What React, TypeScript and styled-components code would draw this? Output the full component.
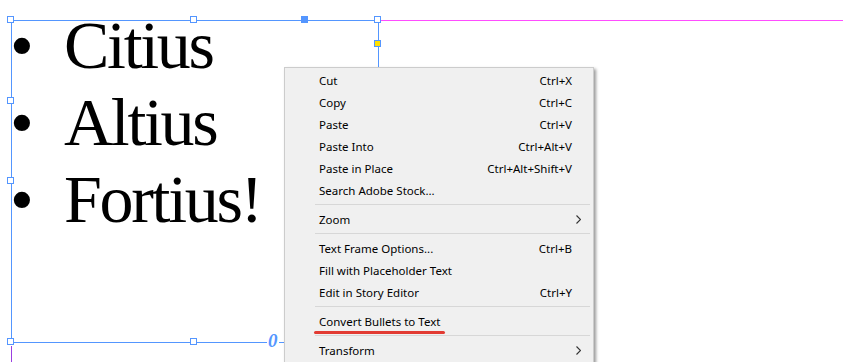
import styled, { createGlobalStyle } from 'styled-components';

const GlobalStyle = createGlobalStyle`
body {
  margin: 0;
  background: #ffffff;
  overflow: hidden;
}
`;

const Canvas = styled.div`
position: relative;
width: 843px;
height: 362px;
overflow: hidden;
background: #ffffff;
`;

const Guide = styled.div`
position: absolute;
left: 381px;
right: 0;
top: 20px;
height: 1px;
background: #ff4dff;
`;

const PurpleGuide = styled.div`
position: absolute;
left: 11px;
top: 346px;
bottom: 0;
width: 1px;
background: #9b3fe0;
`;

const TextFrame = styled.div`
position: absolute;
left: 11px;
top: 20px;
width: 368px;
height: 323px;
box-sizing: border-box;
border: 1px solid #5496ff;
`;

const BulletList = styled.ul`
list-style: none;
margin: -14px 0 0 0;
padding: 0;
font-family: 'Liberation Serif', 'Times New Roman', serif;
font-size: 68px;
line-height: 77px;
letter-spacing: -2.3px;
color: #000;
`;

const BulletRow = styled.li`
display: flex;
white-space: nowrap;
`;

const Bullet = styled.span`
width: 54px;
margin-left: -2px;
flex: none;
letter-spacing: 0;
`;

const Handle = styled.div<{ $x: number; $y: number; $fill?: string }>`
position: absolute;
left: ${p => p.$x - 4}px;
top: ${p => p.$y - 4}px;
width: 7px;
height: 7px;
box-sizing: border-box;
border: 1px solid #5496ff;
background: ${p => p.$fill || '#ffffff'};
`;

const OversetMark = styled.span`
position: absolute;
left: 267px;
top: 331px;
padding: 0 1px;
background: #ffffff;
font-family: 'Liberation Serif', serif;
font-style: italic;
font-weight: bold;
font-size: 19px;
line-height: 20px;
color: #5496ff;
`;

const Menu = styled.div`
position: absolute;
left: 284px;
top: 67px;
width: 310px;
height: 320px;
box-sizing: border-box;
padding-top: 1px;
background: #f0f0f0;
border: 1px solid #cccccc;
box-shadow: 2px 2px 3px rgba(0, 0, 0, 0.4);
font-family: 'Noto Sans', 'Open Sans', sans-serif;
font-size: 11.5px;
color: #000;
`;

const Item = styled.div`
position: relative;
display: flex;
align-items: center;
height: 22px;
padding-left: 34px;
padding-right: 21px;
`;

const Label = styled.span`
flex: 1;
`;

const Shortcut = styled.span`
text-align: right;
`;

const Arrow = styled.svg`
position: absolute;
right: 12px;
top: 7px;
`;

const Separator = styled.div`
height: 7px;
display: flex;
align-items: center;
margin-left: 30px;
margin-right: 3px;
&::after {
  content: '';
  flex: 1;
  height: 1px;
  background: #d7d7d7;
}
`;

const Underline = styled.div`
position: absolute;
left: 29px;
width: 131px;
bottom: -2px;
height: 3px;
border-radius: 2px;
background: #e23b33;
`;

type Entry =
  | { label: string; key?: string; sub?: boolean; mark?: boolean }
  | 'sep';

const entries: Entry[] = [
  { label: 'Cut', key: 'Ctrl+X' },
  { label: 'Copy', key: 'Ctrl+C' },
  { label: 'Paste', key: 'Ctrl+V' },
  { label: 'Paste Into', key: 'Ctrl+Alt+V' },
  { label: 'Paste in Place', key: 'Ctrl+Alt+Shift+V' },
  { label: 'Search Adobe Stock...' },
  'sep',
  { label: 'Zoom', sub: true },
  'sep',
  { label: 'Text Frame Options...', key: 'Ctrl+B' },
  { label: 'Fill with Placeholder Text' },
  { label: 'Edit in Story Editor', key: 'Ctrl+Y' },
  'sep',
  { label: 'Convert Bullets to Text', mark: true },
  'sep',
  { label: 'Transform', sub: true },
];

const words = ['Citius', 'Altius', 'Fortius!'];

// frame handles: corners, midpoints, in-port (yellow) and the selected anchor
const handles: { x: number; y: number; fill?: string }[] = [
  { x: 11, y: 20 },
  { x: 194, y: 20 },
  { x: 305, y: 20, fill: '#5496ff' },
  { x: 378, y: 20 },
  { x: 378, y: 44, fill: '#ffe100' },
  { x: 11, y: 101 },
  { x: 11, y: 181 },
  { x: 11, y: 342 },
  { x: 194, y: 342 },
];

export default function App() {
  return (
    <Canvas>
      <GlobalStyle />
      <Guide />
      <PurpleGuide />
      <TextFrame>
        <BulletList>
          {words.map(w => (
            <BulletRow key={w}>
              <Bullet>•</Bullet>
              <span>{w}</span>
            </BulletRow>
          ))}
        </BulletList>
      </TextFrame>
      {handles.map((h, i) => (
        <Handle key={i} $x={h.x} $y={h.y} $fill={h.fill} />
      ))}
      <OversetMark>0</OversetMark>
      <Menu>
        {entries.map((e, i) =>
          e === 'sep' ? (
            <Separator key={i} />
          ) : (
            <Item key={i}>
              <Label>{e.label}</Label>
              {e.key && <Shortcut>{e.key}</Shortcut>}
              {e.sub && (
                <Arrow width="5" height="9" viewBox="0 0 5 9">
                  <path d="M0.5 0.5 L4.5 4.5 L0.5 8.5" fill="none" stroke="#333" strokeWidth="1.1" />
                </Arrow>
              )}
              {e.mark && <Underline />}
            </Item>
          )
        )}
      </Menu>
    </Canvas>
  );
}
